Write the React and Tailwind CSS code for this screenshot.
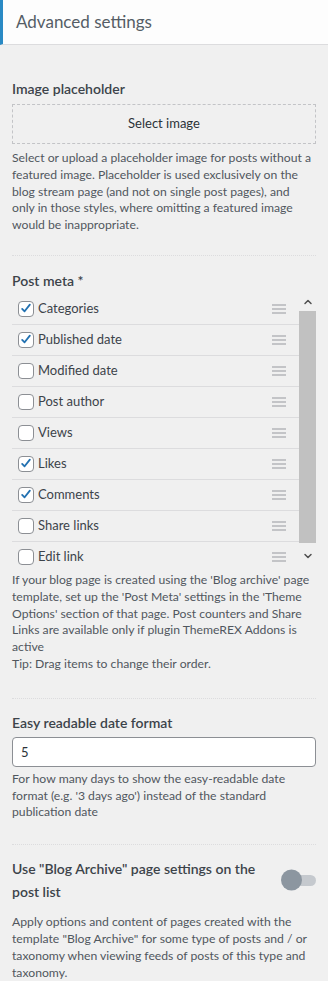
import { ChevronUp, ChevronDown } from "lucide-react";

const metaItems = [
  { name: "Categories", checked: true },
  { name: "Published date", checked: true },
  { name: "Modified date", checked: false },
  { name: "Post author", checked: false },
  { name: "Views", checked: false },
  { name: "Likes", checked: true },
  { name: "Comments", checked: true },
  { name: "Share links", checked: false },
  { name: "Edit link", checked: false },
];

function Checkbox({ checked }) {
  return (
    <span className="flex size-4 shrink-0 items-center justify-center rounded-[4px] border border-[#8c8f94] bg-white">
      {checked && (
        <svg viewBox="0 0 20 20" className="size-[15px]">
          <path d="M4.5 10.5 L8 14 L15.5 4.5" fill="none" stroke="#2271b1" strokeWidth="2.6" strokeLinecap="round" strokeLinejoin="round" />
        </svg>
      )}
    </span>
  );
}

function DragHandle() {
  return (
    <span className="flex w-[14px] flex-col gap-[2px]">
      <span className="h-[2px] bg-[#c3c4c7]" />
      <span className="h-[2px] bg-[#c3c4c7]" />
      <span className="h-[2px] bg-[#c3c4c7]" />
    </span>
  );
}

function Separator() {
  return <div className="border-t border-dotted border-[#dcdcde]" />;
}

export default function App() {
  return (
    <div
      className="min-h-[981px] bg-[#f0f0f0] text-[#50575e]"
      style={{ fontFamily: 'Lato, "Noto Sans", sans-serif' }}
    >
      {/* section header */}
      <div className="flex h-[45px] items-center border-b border-[#dcdcde] border-l-[3px] border-l-[#2a8ac4] bg-[#fdfdfd] pl-[13px]">
        <h3 className="text-[17px] text-[#555d66]">Advanced settings</h3>
      </div>

      <div className="px-3">
        {/* image placeholder */}
        <div className="pt-[35px]">
          <div className="text-[14px] font-semibold leading-[18px] text-[#3c434a]">Image placeholder</div>
          <button className="mt-[6px] flex h-[40px] w-full items-center justify-center border border-dashed border-[#c3c4c7] text-[13px] text-[#2c3338]">
            Select image
          </button>
          <p className="mt-[6px] text-[12.2px] leading-[16.8px]">
            Select or upload a placeholder image for posts without a featured image. Placeholder is used exclusively on
            the blog stream page (and not on single post pages), and
            <br />
            only in those styles, where omitting a featured image would be inappropriate.
          </p>
        </div>

        <div className="mt-[21px]">
          <Separator />
        </div>

        {/* post meta */}
        <div className="pt-[16px]">
          <div className="text-[14px] font-semibold leading-[18px] text-[#3c434a]">Post meta *</div>
          <div className="mt-[4px] flex h-[276px] overflow-hidden">
            <div className="flex-1">
              {metaItems.map((item) => (
                <div
                  key={item.name}
                  className="flex h-[31px] items-center border-b border-[#dcdcde] pl-[6px] pr-[13px]"
                >
                  <Checkbox checked={item.checked} />
                  <span className="ml-[4px] flex-1 text-[13px] text-[#3c434a]">{item.name}</span>
                  <DragHandle />
                </div>
              ))}
            </div>
            <div className="flex w-[17px] flex-col">
              <div className="flex h-[17px] items-center justify-center">
                <ChevronUp className="size-[12px] text-[#505050]" strokeWidth={3} />
              </div>
              <div className="h-[232px] bg-[#c1c1c1]" />
              <div className="flex flex-1 items-center justify-center">
                <ChevronDown className="size-[12px] text-[#505050]" strokeWidth={3} />
              </div>
            </div>
          </div>
          <p className="mt-[2px] text-[12.2px] leading-[16.8px]">
            If your blog page is created using the 'Blog archive' page template, set up the 'Post Meta' settings in
            the 'Theme Options' section of that page. Post counters and Share Links are available only if plugin
            ThemeREX Addons is active
            <br />
            Tip: Drag items to change their order.
          </p>
        </div>

        <div className="mt-[25px]">
          <Separator />
        </div>

        {/* easy readable date */}
        <div className="pt-[15px]">
          <div className="text-[14px] font-semibold leading-[18px] text-[#3c434a]">Easy readable date format</div>
          <input
            defaultValue="5"
            className="mt-[5px] h-[30px] w-full rounded-[4px] border border-[#8c8f94] bg-white px-2 text-[13px] text-[#2c3338]"
          />
          <p className="mt-[4px] text-[12.2px] leading-[16.8px]">
            For how many days to show the easy-readable date format (e.g. '3 days ago') instead of the standard
            publication date
          </p>
        </div>

        <div className="mt-[23px]">
          <Separator />
        </div>

        {/* blog archive toggle */}
        <div className="pt-[12px]">
          <div className="flex items-center">
            <div className="flex-1 pr-6 text-[14px] font-semibold leading-[23px] text-[#3c434a]">
              Use "Blog Archive" page settings on the post list
            </div>
            <span className="relative flex h-[11px] w-[35px] items-center">
              <span className="ml-auto h-[11px] w-[24px] rounded-full bg-[#c5c9ce]" />
              <span className="absolute left-0 top-1/2 size-[21px] -translate-y-1/2 rounded-full bg-[#8c96a0]" />
            </span>
          </div>
          <p className="mt-[11px] text-[12.2px] leading-[16.8px]">
            Apply options and content of pages created with the template "Blog Archive" for some type of posts and /
            or taxonomy when viewing feeds of posts of this type and taxonomy.
          </p>
        </div>
      </div>
    </div>
  );
}
